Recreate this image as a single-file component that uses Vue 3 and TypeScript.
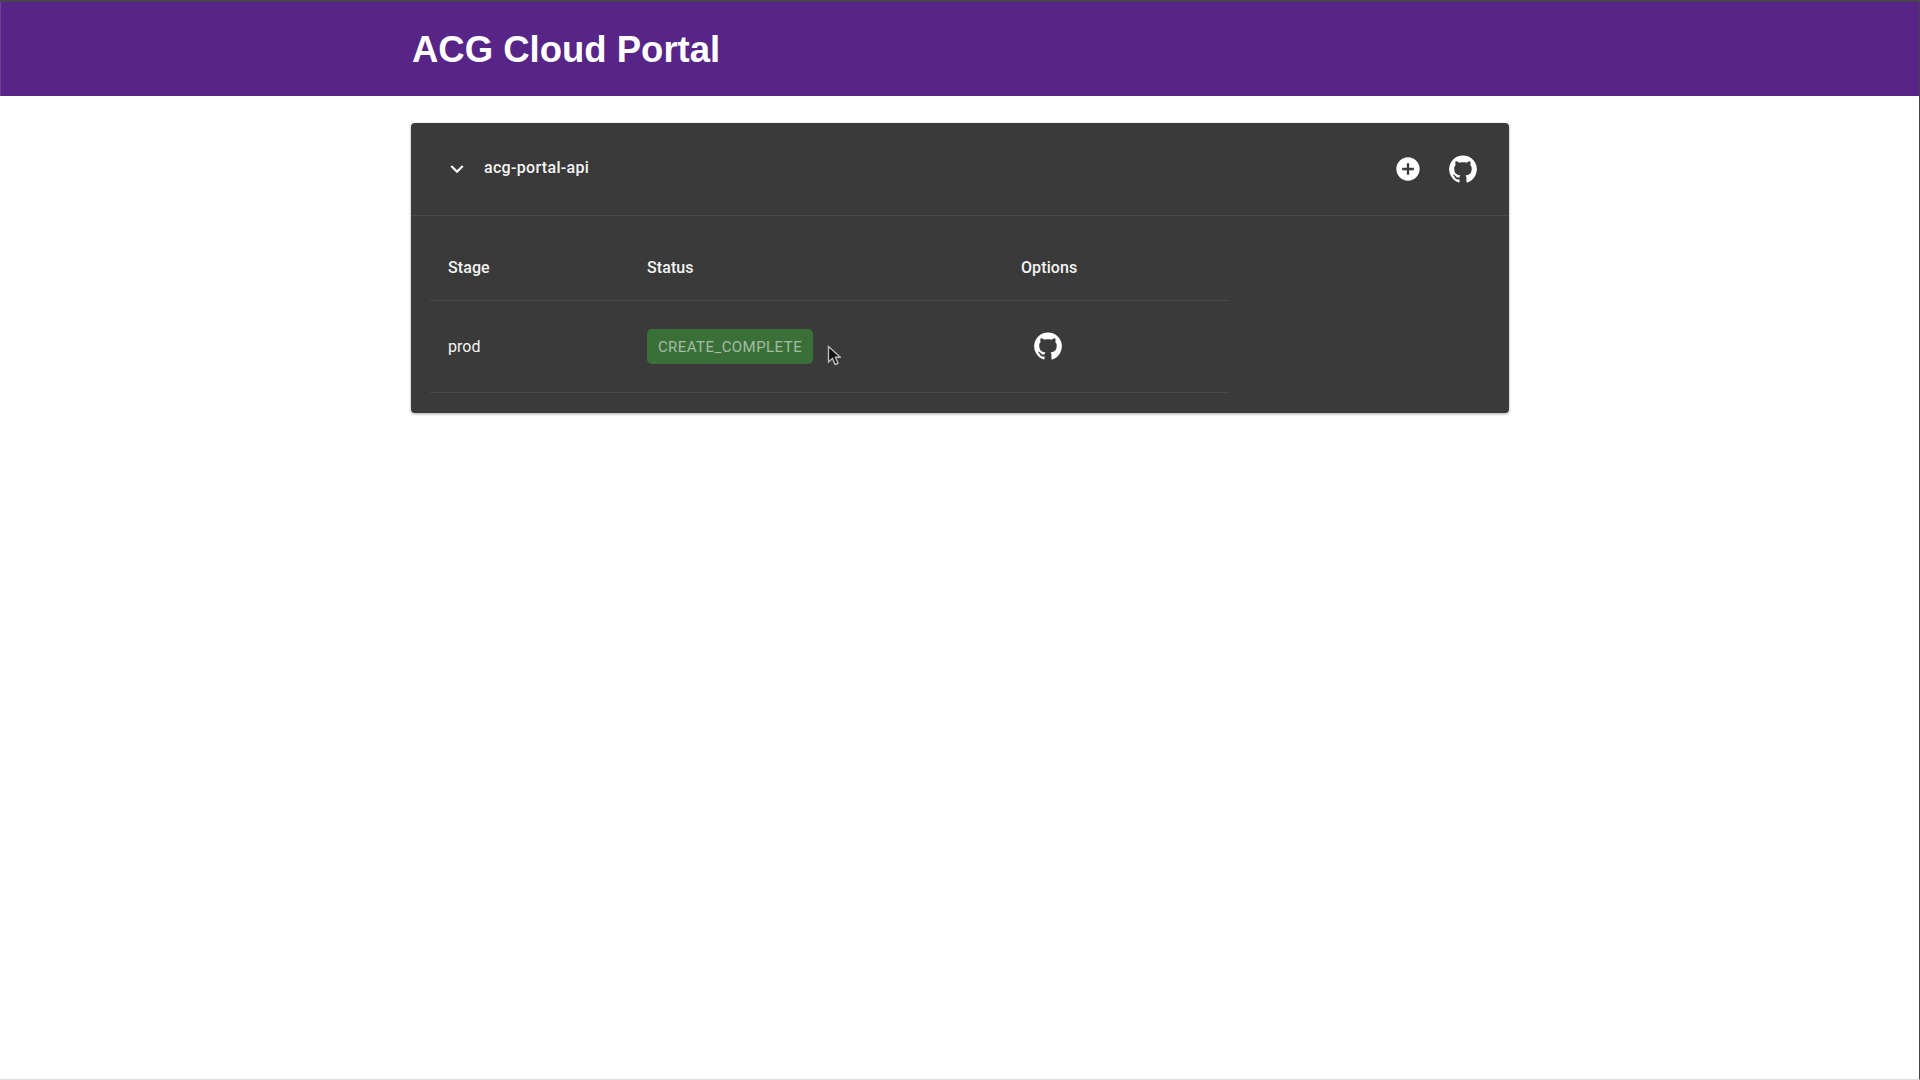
<template>
  <div class="page">
    <header class="topbar">
      <h1 class="title">ACG Cloud Portal</h1>
    </header>
    <main class="content">
      <section class="card">
        <div class="card-head">
          <div class="card-name">
            <svg class="chevron" viewBox="0 0 24 24"><path :d="chevronPath" /></svg>
            <span class="name-text">{{ projectName }}</span>
          </div>
          <div class="card-actions">
            <svg class="icon-add" viewBox="0 0 24 24"><path :d="addPath" /></svg>
            <svg class="icon-git" viewBox="0 0 24 24"><path :d="githubPath" /></svg>
          </div>
        </div>
        <div class="card-body">
          <table class="stages">
            <thead>
              <tr>
                <th class="col-stage">Stage</th>
                <th class="col-status">Status</th>
                <th>Options</th>
              </tr>
            </thead>
            <tbody>
              <tr v-for="row in rows" :key="row.stage">
                <td>{{ row.stage }}</td>
                <td class="status-cell">
                  <span class="chip">{{ row.status }}</span>
                  <svg class="cursor" viewBox="0 0 14 22" aria-hidden="true">
                    <path d="M1.5 1.5v15.5l4-3.6 2.6 6.1 2.9-1.2-2.6-6h5z" />
                  </svg>
                </td>
                <td>
                  <svg class="icon-git row-git" viewBox="0 0 24 24"><path :d="githubPath" /></svg>
                </td>
              </tr>
            </tbody>
          </table>
        </div>
      </section>
    </main>
  </div>
</template>

<script setup lang="ts">
const projectName = 'acg-portal-api'

const rows = [{ stage: 'prod', status: 'CREATE_COMPLETE' }]

const chevronPath = 'M16.59 8.59L12 13.17 7.41 8.59 6 10l6 6 6-6z'
const addPath = 'M12 2C6.48 2 2 6.48 2 12s4.48 10 10 10 10-4.48 10-10S17.52 2 12 2zm5 11h-4v4h-2v-4H7v-2h4V7h2v4h4v2z'
const githubPath = 'M12 1.27a11 11 0 00-3.48 21.46c.55.09.73-.28.73-.55v-1.84c-3.03.64-3.67-1.46-3.67-1.46-.55-1.29-1.28-1.65-1.28-1.65-.92-.65.1-.65.1-.65 1.1 0 1.73 1.1 1.73 1.1.92 1.65 2.57 1.2 3.21.92a2 2 0 01.64-1.47c-2.47-.27-5.04-1.19-5.04-5.5 0-1.1.46-2.1 1.2-2.84a3.76 3.76 0 010-2.93s.91-.28 3.11 1.1c1.8-.49 3.7-.49 5.5 0 2.1-1.38 3.02-1.1 3.02-1.1a3.76 3.76 0 010 2.93c.83.74 1.2 1.74 1.2 2.94 0 4.21-2.57 5.13-5.04 5.4.45.37.82.92.82 2.02v3.03c0 .27.1.64.73.55A11 11 0 0012 1.27'
</script>

<style>
html,
body {
  margin: 0;
  background: #fff;
}
</style>

<style scoped>
.page {
  box-sizing: border-box;
  min-height: 100vh;
  background: #fff;
  border-top: 2px solid #48464c;
  border-right: 1px solid #444;
  border-bottom: 1px solid #ddd;
  font-family: Roboto, "Liberation Sans", sans-serif;
}

.topbar {
  height: 94px;
  background: #572488;
  border-left: 1px solid #6b4296;
  display: flex;
  align-items: center;
}

.title {
  margin: 1px 0 0 411px;
  color: #fff;
  font-family: "Liberation Sans", Arial, sans-serif;
  font-size: 36.5px;
  font-weight: 700;
}

.content {
  padding-top: 27px;
  display: flex;
  justify-content: center;
}

.card {
  width: 1098px;
  margin-left: 1px;
  background: #3a3a3a;
  color: #f4f4f4;
  border-radius: 4px;
  box-shadow: 0 1px 3px rgba(0, 0, 0, 0.35);
}

.card-head {
  height: 93px;
  box-sizing: border-box;
  border-bottom: 1px solid #484848;
  padding: 0 31px 0 33px;
  display: flex;
  align-items: center;
  justify-content: space-between;
}

.card-name {
  display: flex;
  align-items: center;
  gap: 14px;
  font-size: 16px;
  font-weight: 500;
  letter-spacing: 0.32px;
  margin-top: -2px;
}

.name-text {
  margin-bottom: 2px;
}

.chevron {
  width: 26px;
  height: 26px;
  fill: #fff;
  margin-top: 2px;
}

.card-actions {
  display: flex;
  align-items: center;
  gap: 26px;
}

.icon-add {
  width: 28px;
  height: 28px;
  fill: #fff;
}

.icon-git {
  display: block;
  width: 30px;
  height: 30px;
  fill: #fff;
}

.card-body {
  padding: 0 19px 20px;
}

.stages {
  width: 799px;
  border-collapse: collapse;
  table-layout: fixed;
  font-size: 16px;
}

.stages th {
  box-sizing: border-box;
  height: 84px;
  padding: 20px 0 0 18px;
  text-align: left;
  font-weight: 500;
  letter-spacing: 0.1px;
  border-bottom: 1px solid #484848;
}

.stages td {
  height: 91px;
  padding: 0 0 0 18px;
  border-bottom: 1px solid #484848;
}

.col-stage {
  width: 199px;
}

.col-status {
  width: 374px;
}

.status-cell {
  position: relative;
}

.chip {
  display: inline-block;
  box-sizing: border-box;
  width: 166px;
  height: 35px;
  line-height: 36px;
  text-align: center;
  background: #3a7038;
  border-radius: 5px;
  color: #a3bca2;
  font-size: 15px;
  font-weight: 400;
  letter-spacing: 0.45px;
  white-space: nowrap;
}

.cursor {
  position: absolute;
  left: 198px;
  top: 44px;
  width: 14px;
  height: 22px;
  fill: #111;
  stroke: #bbb;
  stroke-width: 1.4;
}

.row-git {
  margin-left: 12px;
}
</style>
